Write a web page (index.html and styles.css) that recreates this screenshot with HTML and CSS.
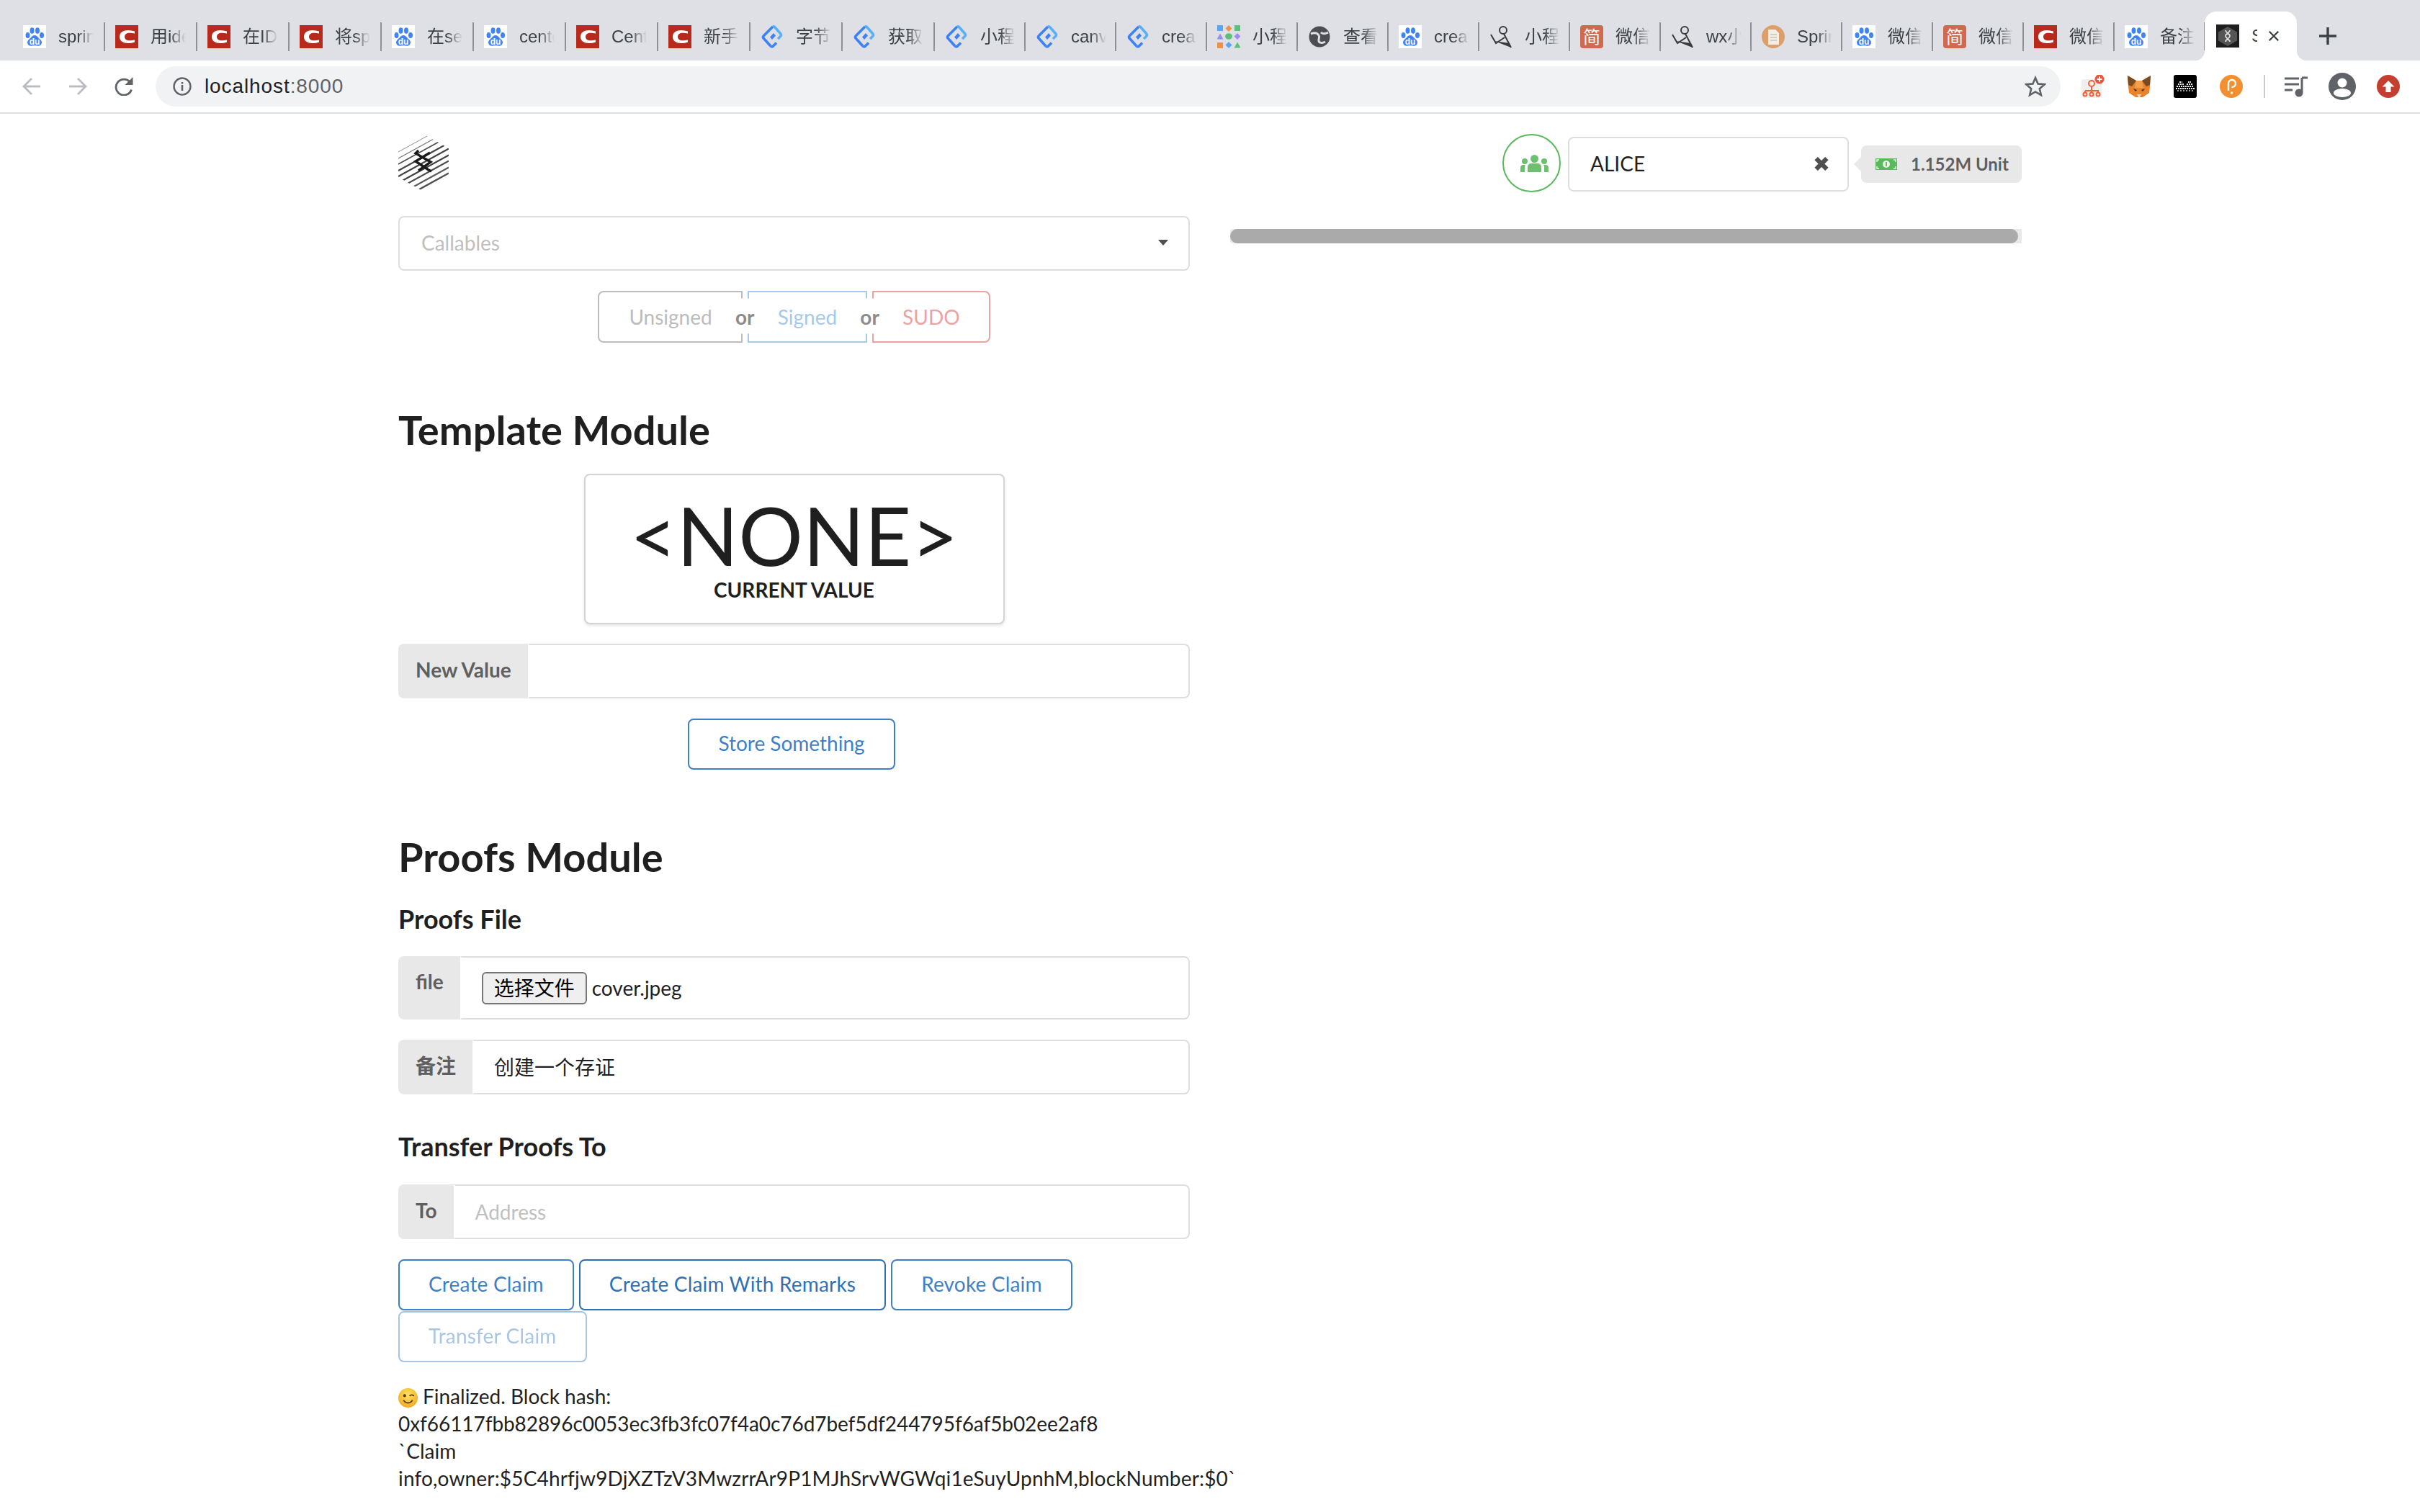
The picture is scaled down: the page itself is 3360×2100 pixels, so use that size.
FILE: index.html
```html
<!DOCTYPE html>
<html lang="en">
<head>
    <meta charset="UTF-8" />
    <meta name="viewport" content="width=device-width, initial-scale=1.0" />
    <title>Substrate Front End</title>
    <link rel="stylesheet" href="styles.css">
</head>
<body>
    <!-- Icon sheet -->
    <svg class="icon-sheet" xmlns="http://www.w3.org/2000/svg">
        <symbol id="i-baidu" viewBox="0 0 32 32">
            <rect width="32" height="32" fill="#fff"/>
            <ellipse cx="6.500" cy="14" rx="3" ry="4" fill="#3f83f5"/>
            <ellipse cx="12.500" cy="7.500" rx="3" ry="4.300" fill="#3f83f5"/>
            <ellipse cx="20" cy="7.500" rx="3" ry="4.300" fill="#3f83f5"/>
            <ellipse cx="26" cy="14" rx="3" ry="4" fill="#3f83f5"/>
            <path d="M16 14c3.500 0 4.500 3 7 5 3 2.500 3.500 4.500 2.500 7-1 2.500-3.500 3-6 2.500-2.500-.5-4.500-.5-7 0-2.500.5-5 0-6-2.500s-.5-4.500 2.500-7c2.500-2 3.500-5 7-5z" fill="#3f83f5"/>
            <text x="16" y="27" class="icon-du">du</text>
        </symbol>
        <symbol id="i-csdn" viewBox="0 0 32 32">
            <rect width="32" height="32" fill="#b92a1d"/>
            <path d="M27 8.500c-3-1-6-1.500-9-1.500C11 7 6 10 6 16s5 9 12 9c3 0 6-.5 9-1.500v-3c-2.500.5-5 .8-7 .8-4.500 0-7-2-7-5.300s2.500-5.300 7-5.300c2 0 4.500.3 7 .8z" fill="#fff"/>
        </symbol>
        <symbol id="i-chevron" viewBox="0 0 32 32">
            <path d="M17 2 4.500 14.500Q2.500 16.500 4.500 18.500L14 29" fill="none" stroke="#3b82f6" stroke-width="3.600"/>
            <path d="M14 29q1.500 1.500 3.500 0L22 24.500" fill="none" stroke="#3b82f6" stroke-width="3.600"/>
            <path d="M17 2q1.500-.5 2.500.5l8 9q2 2 0 4L24 19" fill="none" stroke="#57b0f8" stroke-width="3.600"/>
            <path d="m18 11-5 5.500 3 3.500 5-5.500z" fill="#3b82f6"/>
        </symbol>
        <symbol id="i-grid" viewBox="0 0 32 32">
            <rect x="0" y="0" width="8" height="8" fill="#5ba4f7"/>
            <path d="m16 0 4.500 4.500L16 9l-4.500-4.500z" fill="#f0914a"/>
            <rect x="24" y="0" width="8" height="8" fill="#5cc07a"/>
            <path d="m4 11.500 4.500 8h-9z" fill="#9a8cf0"/>
            <ellipse cx="16" cy="15.500" rx="5" ry="4.200" fill="#5cc07a"/>
            <path d="m28 11 4.500 4.500L28 20l-4.500-4.500z" fill="#9a8cf0"/>
            <rect x="0" y="24" width="8" height="8" fill="#f0914a"/>
            <path d="m16 23 4.500 4.500L16 32l-4.500-4.500z" fill="#5ba4f7"/>
            <path d="m28 23.500 4.500 8h-9z" fill="#5cc07a"/>
        </symbol>
        <symbol id="i-globe" viewBox="0 0 32 32">
            <circle cx="16" cy="16" r="14.500" fill="#4c4e52"/>
            <path d="M4 12c5-2 9-1 11 2s-1 5 0 8 5 3 9 1M28 10c-4 2-8 2-10 0" fill="none" stroke="#dfe0e5" stroke-width="3"/>
        </symbol>
        <symbol id="i-ying" viewBox="0 0 32 32">
            <circle cx="19" cy="7" r="5" fill="none" stroke="#3a3a3a" stroke-width="2"/>
            <path d="M2 13l7 12 12-8M20 12l10 19" fill="none" stroke="#3a3a3a" stroke-width="2"/>
            <path d="M7 22l21 3 2 6z" fill="#3a3a3a"/>
        </symbol>
        <symbol id="i-jian" viewBox="0 0 32 32">
            <rect width="32" height="32" rx="4" fill="#cf6a50"/>
            <text x="16" y="25" class="icon-jian">简</text>
        </symbol>
        <symbol id="i-doc" viewBox="0 0 32 32">
            <circle cx="16" cy="16" r="16" fill="#dc9f6b"/>
            <path d="M9 6h10l5 5v16H9z" fill="#f3efe8"/>
            <path d="M12 13h9M12 17h9M12 21h9" stroke="#c9c2b6" stroke-width="1.500"/>
        </symbol>
        <symbol id="i-chain" viewBox="0 0 32 32">
            <rect width="32" height="32" fill="#1e1e1e"/>
            <path d="M16 3 29 10.500v12L16 30 3 22.500v-12z" fill="#555"/>
            <path d="M13 8c0 4 6 4 6 8s-6 4-6 8M19 8c0 4-6 4-6 8s6 4 6 8" fill="none" stroke="#ddd" stroke-width="1.800"/>
        </symbol>
    </svg>

    <header class="browser-chrome">
        <div class="tab-strip">
            <div class="tab"><svg class="favicon"><use href="#i-baidu"/></svg><span class="tab-title">spring</span></div>
            <div class="tab"><svg class="favicon"><use href="#i-csdn"/></svg><span class="tab-title">用idea</span></div>
            <div class="tab"><svg class="favicon"><use href="#i-csdn"/></svg><span class="tab-title">在IDEA</span></div>
            <div class="tab"><svg class="favicon"><use href="#i-csdn"/></svg><span class="tab-title">将spring</span></div>
            <div class="tab"><svg class="favicon"><use href="#i-baidu"/></svg><span class="tab-title">在seata</span></div>
            <div class="tab"><svg class="favicon"><use href="#i-baidu"/></svg><span class="tab-title">centos</span></div>
            <div class="tab"><svg class="favicon"><use href="#i-csdn"/></svg><span class="tab-title">Centos</span></div>
            <div class="tab"><svg class="favicon"><use href="#i-csdn"/></svg><span class="tab-title">新手教程</span></div>
            <div class="tab"><svg class="favicon"><use href="#i-chevron"/></svg><span class="tab-title">字节跳动</span></div>
            <div class="tab"><svg class="favicon"><use href="#i-chevron"/></svg><span class="tab-title">获取数据</span></div>
            <div class="tab tab-narrow"><svg class="favicon"><use href="#i-chevron"/></svg><span class="tab-title">小程序</span></div>
            <div class="tab tab-narrow"><svg class="favicon"><use href="#i-chevron"/></svg><span class="tab-title">canvas</span></div>
            <div class="tab tab-narrow"><svg class="favicon"><use href="#i-chevron"/></svg><span class="tab-title">create</span></div>
            <div class="tab tab-narrow"><svg class="favicon"><use href="#i-grid"/></svg><span class="tab-title">小程序</span></div>
            <div class="tab tab-narrow"><svg class="favicon"><use href="#i-globe"/></svg><span class="tab-title">查看详情</span></div>
            <div class="tab tab-narrow"><svg class="favicon"><use href="#i-baidu"/></svg><span class="tab-title">create</span></div>
            <div class="tab tab-narrow"><svg class="favicon"><use href="#i-ying"/></svg><span class="tab-title">小程序</span></div>
            <div class="tab tab-narrow"><svg class="favicon"><use href="#i-jian"/></svg><span class="tab-title">微信小程</span></div>
            <div class="tab tab-narrow"><svg class="favicon"><use href="#i-ying"/></svg><span class="tab-title">wx小程</span></div>
            <div class="tab tab-narrow"><svg class="favicon"><use href="#i-doc"/></svg><span class="tab-title">Spring</span></div>
            <div class="tab tab-narrow"><svg class="favicon"><use href="#i-baidu"/></svg><span class="tab-title">微信小程</span></div>
            <div class="tab tab-narrow"><svg class="favicon"><use href="#i-jian"/></svg><span class="tab-title">微信小程</span></div>
            <div class="tab tab-narrow"><svg class="favicon"><use href="#i-csdn"/></svg><span class="tab-title">微信小程</span></div>
            <div class="tab tab-narrow"><svg class="favicon"><use href="#i-baidu"/></svg><span class="tab-title">备注说明</span></div>
            <div class="tab-active">
                <svg class="favicon"><use href="#i-chain"/></svg>
                <span class="tab-title tab-title-short">Substrate</span>
                <svg class="tab-close" viewBox="0 0 18 18"><path d="M2 2l14 14M16 2 2 16" stroke="#3c4043" stroke-width="2.600"/></svg>
            </div>
            <svg class="new-tab" viewBox="0 0 24 24"><path d="M12 0v24M0 12h24" stroke="#3c4043" stroke-width="3.400"/></svg>
        </div>

        <div class="toolbar">
            <div class="tool-btn"><svg class="tool-nav" viewBox="0 0 26 26"><path d="M25 13H3M13 2 2 13l11 11" fill="none" stroke="#bcbdc0" stroke-width="2.800"/></svg></div>
            <div class="tool-btn"><svg class="tool-nav" viewBox="0 0 26 26"><path d="M1 13h22M13 2l11 11-11 11" fill="none" stroke="#bcbdc0" stroke-width="2.800"/></svg></div>
            <div class="tool-btn"><svg class="tool-nav" viewBox="0 0 26 26"><path d="M23.500 17.500a11 11 0 1 1-2-10.500" fill="none" stroke="#5f6368" stroke-width="2.800"/><path d="M25.500 0v11h-11z" fill="#5f6368"/></svg></div>
            <div class="url-pill">
                <svg class="url-info" viewBox="0 0 26 26"><circle cx="13" cy="13" r="11.500" fill="none" stroke="#5f6368" stroke-width="2.400"/><path d="M13 11v8M13 7v2.500" stroke="#5f6368" stroke-width="2.600"/></svg>
                <span class="url-text">localhost<span class="url-port">:8000</span></span>
                <svg class="url-star" viewBox="0 0 30 30"><path d="m15 3 3.600 8.400 9.100.8-6.900 6 2.100 8.900-7.900-4.700-7.900 4.700 2.100-8.900-6.900-6 9.100-.8z" fill="none" stroke="#5f6368" stroke-width="2.600"/></svg>
            </div>
            <div class="ext-group">
                <div class="tool-btn">
                    <svg class="ext-icon" viewBox="0 0 32 32">
                        <rect x="0" y="6" width="28" height="26" rx="4" fill="#efefef"/>
                        <circle cx="14" cy="12" r="4" fill="none" stroke="#f0623c" stroke-width="2"/>
                        <path d="M14 16v6M5 22v3M14 22v3M23 25v-3H5" fill="none" stroke="#f0623c" stroke-width="2"/>
                        <circle cx="5" cy="27" r="2.500" fill="none" stroke="#f0623c" stroke-width="2"/>
                        <circle cx="14" cy="27" r="2.500" fill="none" stroke="#f0623c" stroke-width="2"/>
                        <circle cx="23" cy="27" r="2.500" fill="none" stroke="#f0623c" stroke-width="2"/>
                        <circle cx="25" cy="6" r="6.500" fill="#f0523c"/>
                        <path d="M25 2.500v7M21.500 6h7" stroke="#fff" stroke-width="1.800"/>
                    </svg>
                </div>
                <div class="tool-btn">
                    <svg class="ext-icon" viewBox="0 0 32 32">
                        <path d="M0 1l12 7h8L32 1l-1 15-1 9-9 6h-10l-9-6-1-9z" fill="#e8832a"/>
                        <path d="M0 1l12 7-6 8-5-2z" fill="#7a4a22"/>
                        <path d="M32 1 20 8l6 8 5-2z" fill="#7a4a22"/>
                        <path d="M12 8h8l2 10H10z" fill="#f2a04f"/>
                        <path d="M8 19l5 2-2 2zM24 19l-5 2 2 2z" fill="#3a2a1c"/>
                        <path d="M13 27h6l-2 4h-2z" fill="#e6d6c4"/>
                    </svg>
                </div>
                <div class="tool-btn">
                    <svg class="ext-icon" viewBox="0 0 32 32">
                        <rect width="32" height="32" rx="3" fill="#000"/>
                        <path d="M8 10h4M20 10h4M6 13h8M18 13h8M4 16h24M3 19h26" stroke="#f0f0f0" stroke-width="2" stroke-dasharray="2 1"/>
                        <path d="M5 22h22" stroke="#999" stroke-width="2" stroke-dasharray="2 2"/>
                    </svg>
                </div>
                <div class="tool-btn">
                    <svg class="ext-icon" viewBox="0 0 32 32">
                        <circle cx="16" cy="16" r="16" fill="#f29031"/>
                        <path d="M12 22V11.500a5 5 0 1 1 4.500 5.500" fill="none" stroke="#fff" stroke-width="2.400"/>
                        <circle cx="16.500" cy="25" r="1.700" fill="#fff"/>
                    </svg>
                </div>
                <div class="ext-divider"></div>
                <div class="tool-btn">
                    <svg class="ext-icon" viewBox="0 0 32 32">
                        <path d="M0 5h20M0 13h20M0 21h11" stroke="#5f6368" stroke-width="3"/>
                        <path d="M24 4v20" stroke="#5f6368" stroke-width="3"/>
                        <path d="M24 4h8" stroke="#5f6368" stroke-width="3"/>
                        <circle cx="20" cy="25" r="5.500" fill="#5f6368"/>
                    </svg>
                </div>
                <div class="tool-btn">
                    <svg class="avatar-icon" viewBox="0 0 38 38">
                        <circle cx="19" cy="19" r="19" fill="#5f6368"/>
                        <circle cx="19" cy="14" r="6.500" fill="#fff"/>
                        <ellipse cx="19" cy="28" rx="12" ry="6" fill="#fff"/>
                    </svg>
                </div>
                <div class="tool-btn">
                    <svg class="ext-icon" viewBox="0 0 32 32">
                        <circle cx="16" cy="16" r="16" fill="#c53f31"/>
                        <path d="M16 8l8.500 8.500h-5V24h-7v-7.500h-5z" fill="#fff"/>
                    </svg>
                </div>
            </div>
        </div>
    </header>

    <main class="container">
        <div class="topbar">
            <svg class="logo" viewBox="0 0 70 80">
                <defs>
                    <clipPath id="hex"><path d="M35 0 70 20v40L35 80 0 60V20z"/></clipPath>
                </defs>
                <g clip-path="url(#hex)" stroke="#222">
                    <path d="M0 8 70-30.500" stroke-width=".8" opacity=".4"/>
                    <path d="M0 17 70-21.500" stroke-width=".9" opacity=".45"/>
                    <path d="M0 25 70-13.500" stroke-width="1" opacity=".5"/>
                    <path d="M0 34 70-4.500" stroke-width="1.200" opacity=".6"/>
                    <path d="M0 42 70 3.500" stroke-width="1.600" opacity=".8"/>
                    <path d="M0 51 70 12.500" stroke-width="2" opacity=".85"/>
                    <path d="M0 59 70 20.500" stroke-width="2.200" opacity=".85"/>
                    <path d="M0 68 70 29.500" stroke-width="2.200" opacity=".85"/>
                    <path d="M0 76 70 37.500" stroke-width="2.200" opacity=".8"/>
                    <path d="M0 85 70 46.500" stroke-width="2.200" opacity=".75"/>
                    <path d="M0 93 70 54.500" stroke-width="2.400" opacity=".8"/>
                    <path d="M0 102 70 63.500" stroke-width="2.600" opacity=".85"/>
                    <path d="M0 110 70 71.500" stroke-width="2.800" opacity=".9"/>
                    <path d="M0 119 70 80.500" stroke-width="3" opacity=".9"/>
                </g>
                <path d="M28 23 24 27l21 12-17 12M44 26 24 38l18 12 4 2" fill="none" stroke="#1a1a1a" stroke-width="3.400"/>
            </svg>
            <div class="account">
                <div class="account-circle">
                    <svg class="users-icon" viewBox="0 0 39 24">
                        <circle cx="19.500" cy="5.500" r="5.500"/>
                        <circle cx="6" cy="9" r="4"/>
                        <circle cx="33" cy="9" r="4"/>
                        <path d="M10 24V17c0-3 2-5 5-5h9c3 0 5 2 5 5v7z"/>
                        <path d="M0 24v-6c0-3 2-4 4-4h3c-1 1-1 2-1 4v6zM39 24v-6c0-3-2-4-4-4h-3c1 1 1 2 1 4v6z"/>
                    </svg>
                </div>
                <div class="account-select">
                    <span>ALICE</span>
                    <svg class="clear-icon" viewBox="0 0 19 18"><path d="M2.500 2l14 14M16.500 2l-14 14" stroke="#4f4f4f" stroke-width="6"/></svg>
                </div>
                <div class="balance">
                    <svg class="money-icon" viewBox="0 0 30 16">
                        <rect width="30" height="16" fill="#5cb85c"/>
                        <circle cx="15" cy="8" r="5" fill="#e9f5e9"/>
                        <path d="M15 5v6" stroke="#5cb85c" stroke-width="1.800"/>
                        <path d="M2 5V2h3M28 5V2h-3M2 11v3h3M28 11v3h-3" fill="none" stroke="#e9f5e9" stroke-width="1.400"/>
                    </svg>
                    <span>1.152M Unit</span>
                </div>
            </div>
        </div>

        <div class="columns">
            <div class="col-left">
                <div class="callables">
                    <span class="placeholder">Callables</span>
                    <i class="caret"></i>
                </div>

                <div class="tx-group">
                    <div class="tx-btn tx-unsigned">Unsigned</div>
                    <div class="tx-or">or</div>
                    <div class="tx-btn tx-signed">Signed</div>
                    <div class="tx-or">or</div>
                    <div class="tx-btn tx-sudo">SUDO</div>
                </div>

                <!-- Template module -->
                <h1 class="module-title">Template Module</h1>
                <div class="stat-card">
                    <div class="stat-value">&lt;NONE&gt;</div>
                    <div class="stat-label">Current Value</div>
                </div>
                <div class="field field-first">
                    <div class="field-label">New Value</div>
                    <div class="field-input"></div>
                </div>
                <div class="center-row">
                    <div class="blue-btn">Store Something</div>
                </div>

                <!-- Proofs module -->
                <h1 class="module-title">Proofs Module</h1>
                <h3 class="sub-title">Proofs File</h3>
                <div class="field field-file">
                    <div class="field-label field-label-top">file</div>
                    <div class="field-input">
                        <span class="file-btn">选择文件</span>
                        <span class="file-name">cover.jpeg</span>
                    </div>
                </div>
                <div class="field">
                    <div class="field-label">备注</div>
                    <div class="field-input">创建一个存证</div>
                </div>

                <h3 class="sub-title sub-title-spaced">Transfer Proofs To</h3>
                <div class="field">
                    <div class="field-label">To</div>
                    <div class="field-input placeholder">Address</div>
                </div>
                <div class="action-row">
                    <div class="blue-btn">Create Claim</div>
                    <div class="blue-btn blue-btn-hover">Create Claim With Remarks</div>
                    <div class="blue-btn">Revoke Claim</div>
                    <div class="blue-btn blue-btn-disabled">Transfer Claim</div>
                </div>

                <div class="tx-status">
                    <svg class="emoji" viewBox="0 0 26 26">
                        <defs>
                            <radialGradient id="face" cx=".5" cy=".35" r=".7"><stop offset="0" stop-color="#ffe25c"/><stop offset="1" stop-color="#f2a51d"/></radialGradient>
                        </defs>
                        <circle cx="13" cy="13" r="13" fill="url(#face)"/>
                        <circle cx="8.500" cy="10" r="2" fill="#5b3a10"/>
                        <path d="M15 10.500c2-2 4-2 6 0" fill="none" stroke="#5b3a10" stroke-width="1.600"/>
                        <path d="M7 16c3 5 9 5 12 0" fill="none" stroke="#5b3a10" stroke-width="1.800"/>
                    </svg>Finalized. Block hash: <span class="status-hash">0xf66117fbb82896c0053ec3fb3fc07f4a0c76d7bef5df244795f6af5b02ee2af8</span><br>
                    `Claim <span class="status-owner">info,owner:$5C4hrfjw9DjXZTzV3MwzrrAr9P1MJhSrvWGWqi1eSuyUpnhM,blockNumber:$0`</span>
                </div>
            </div>

            <div class="col-right">
                <div class="progress"><div class="progress-fill"></div></div>
            </div>
        </div>
    </main>
</body>
</html>
```

FILE: styles.css
```css
/* Base */
html, body {
    margin: 0;
    height: 2100px;
    overflow: hidden;
    background: #fff;
}

body {
    font-family: Lato, "Noto Sans CJK SC", sans-serif;
    font-size: 28px;
    line-height: 38px;
    color: #1f1f1f;
}

.icon-sheet {
    display: none;
}

.icon-du {
    font-family: "Liberation Sans", sans-serif;
    font-size: 12px;
    font-weight: bold;
    fill: #fff;
    text-anchor: middle;
}

.icon-jian {
    font-family: "Noto Sans CJK SC", sans-serif;
    font-size: 24px;
    fill: #fff;
    text-anchor: middle;
}

/* Browser tabs */
.browser-chrome {
    font-family: "Liberation Sans", "Noto Sans CJK SC", sans-serif;
}

.tab-strip {
    display: flex;
    align-items: flex-end;
    box-sizing: border-box;
    height: 84px;
    padding-left: 18px;
    background: #dfe0e5;
}

.tab {
    display: flex;
    align-items: center;
    box-sizing: border-box;
    width: 128px;
    height: 40px;
    margin-bottom: 13px;
    padding-left: 14px;
    border-right: 2px solid #8f9094;
}

.tab-narrow {
    width: 126px;
}

.favicon {
    flex: none;
    width: 32px;
    height: 32px;
}

.tab-title {
    overflow: hidden;
    width: 49px;
    margin-left: 17px;
    font-size: 24px;
    line-height: 32px;
    white-space: nowrap;
    color: #3c4043;
    -webkit-mask-image: linear-gradient(to right, #000 55%, transparent);
    mask-image: linear-gradient(to right, #000 55%, transparent);
}

.tab-active {
    position: relative;
    display: flex;
    align-items: center;
    box-sizing: border-box;
    width: 128px;
    height: 68px;
    margin-left: -1px;
    padding-left: 16px;
    background: #fff;
    border-radius: 16px 16px 0 0;
}

/* concave corners of the active tab */
.tab-active::before,
.tab-active::after {
    content: "";
    position: absolute;
    bottom: 0;
    width: 14px;
    height: 14px;
}

.tab-active::before {
    left: -14px;
    background: radial-gradient(circle at 0 0, #dfe0e5 14px, #fff 14.5px);
}

.tab-active::after {
    right: -14px;
    background: radial-gradient(circle at 100% 0, #dfe0e5 14px, #fff 14.5px);
}

.tab-title-short {
    width: 8px;
    -webkit-mask-image: none;
    mask-image: none;
}

.tab-close {
    width: 16px;
    height: 16px;
    margin-left: 15px;
}

.new-tab {
    width: 24px;
    height: 24px;
    margin: 0 0 22px 31px;
}

/* Toolbar */
.toolbar {
    display: flex;
    align-items: center;
    box-sizing: content-box;
    height: 72px;
    padding: 0 12px;
    background: #fff;
    border-bottom: 2px solid #dddde2;
}

.tool-btn {
    display: flex;
    flex: none;
    align-items: center;
    justify-content: center;
    width: 64px;
    height: 56px;
}

.tool-nav {
    width: 26px;
    height: 26px;
}

.url-pill {
    display: flex;
    flex: 1;
    align-items: center;
    height: 56px;
    margin-left: 12px;
    padding: 0 20px 0 24px;
    background: #f1f2f4;
    border-radius: 28px;
}

.url-info {
    width: 26px;
    height: 26px;
}

.url-text {
    margin-left: 18px;
    font-size: 28px;
    letter-spacing: .9px;
    color: #202124;
}

.url-port {
    color: #5f6368;
}

.url-star {
    width: 30px;
    height: 30px;
    margin-left: auto;
}

.ext-group {
    display: flex;
    align-items: center;
    margin-left: 13px;
}

.ext-icon {
    width: 32px;
    height: 32px;
}

.avatar-icon {
    width: 38px;
    height: 38px;
}

.ext-divider {
    width: 2px;
    height: 32px;
    margin: 0 11px 0 13px;
    background: #ccc;
}

/* Page */
.container {
    width: 2254px;
    margin: 0 auto;
}

.topbar {
    display: flex;
    align-items: flex-start;
    justify-content: space-between;
    padding-top: 28px;
    margin-bottom: 33px;
}

.logo {
    width: 70px;
    height: 80px;
}

.account {
    display: flex;
    align-items: center;
    height: 81px;
}

.account-circle {
    display: flex;
    align-items: center;
    justify-content: center;
    box-sizing: border-box;
    width: 81px;
    height: 81px;
    padding-left: 8px;
    border: 2px solid #5cb85c;
    border-radius: 50%;
}

.users-icon {
    flex: none;
    width: 39px;
    height: 24px;
    fill: #6cc070;
}

.account-select {
    display: flex;
    align-items: center;
    justify-content: space-between;
    box-sizing: border-box;
    width: 390px;
    height: 76px;
    margin: 3px 0 0 10px;
    padding: 0 26px 2px 29px;
    border: 2px solid #dedede;
    border-radius: 8px;
}

.clear-icon {
    width: 20px;
    height: 19px;
}

.balance {
    position: relative;
    display: flex;
    align-items: center;
    box-sizing: border-box;
    width: 223px;
    height: 52px;
    margin: 3px 0 0 17px;
    padding-left: 20px;
    font-size: 24px;
    font-weight: 700;
    color: #5f5f5f;
    background: #e8e8e8;
    border-radius: 8px;
}

/* pointer of the balance label */
.balance::before {
    content: "";
    position: absolute;
    top: 19px;
    left: -7px;
    width: 14px;
    height: 14px;
    background: #e8e8e8;
    transform: rotate(45deg);
}

.money-icon {
    width: 30px;
    height: 16px;
    margin-right: 19px;
}

.columns {
    display: grid;
    grid-template-columns: 1099px 1099px;
    gap: 56px;
}

.placeholder {
    color: #bfbfbf;
}

.callables {
    display: flex;
    align-items: center;
    justify-content: space-between;
    box-sizing: border-box;
    height: 76px;
    padding: 0 28px 2px 30px;
    border: 2px solid #dedede;
    border-radius: 8px;
}

.caret {
    width: 0;
    height: 0;
    border-top: 8px solid #4f4f4f;
    border-right: 7px solid transparent;
    border-left: 7px solid transparent;
}

/* Unsigned / Signed / SUDO */
.tx-group {
    display: flex;
    justify-content: center;
    margin-top: 28px;
}

.tx-btn {
    display: flex;
    align-items: center;
    box-sizing: border-box;
    height: 72px;
    padding: 0 40px;
    border: 2px solid;
}

.tx-unsigned {
    padding-left: 41px;
    color: #bcbcbc;
    border-color: #bcbcbc;
    border-radius: 8px 0 0 8px;
}

.tx-signed {
    color: #a6c9ea;
    border-color: #a6c9ea;
}

.tx-sudo {
    padding-left: 40px;
    color: #e8a3a3;
    border-color: #e8a3a3;
    border-radius: 0 8px 8px 0;
}

.tx-or {
    position: relative;
    z-index: 1;
    display: flex;
    align-items: center;
    justify-content: center;
    width: 7px;
    font-weight: 700;
    color: #8c8c8c;
}

/* white disc that cuts the button edges behind "or" */
.tx-or::before {
    content: "";
    position: absolute;
    top: 10px;
    left: -22px;
    z-index: -1;
    width: 50px;
    height: 50px;
    background: #fff;
    border-radius: 50%;
}

/* Headings */
.module-title {
    margin: 85px 0 25px;
    font-size: 56px;
    font-weight: 700;
    line-height: 72px;
}

.sub-title {
    margin: 0 0 29px;
    padding-top: 2px;
    font-size: 36px;
    font-weight: 700;
    line-height: 46px;
}

.sub-title-spaced {
    margin: 47px 0 30px;
}

/* Stat card */
.stat-card {
    box-sizing: border-box;
    width: 584px;
    height: 209px;
    margin: 0 auto 27px;
    padding-top: 27px;
    text-align: center;
    background: #fff;
    border: 2px solid #d4d4d5;
    border-radius: 8px;
    box-shadow: 0 2px 4px rgba(34, 36, 38, .12);
}

.stat-value {
    font-size: 112px;
    line-height: 112px;
}

.stat-label {
    margin-top: 6px;
    font-weight: 700;
    line-height: 28px;
    text-transform: uppercase;
}

/* Input rows */
.field {
    display: flex;
    height: 76px;
    margin-bottom: 28px;
}

.field-file {
    height: 88px;
}

.field-label {
    display: flex;
    align-items: center;
    padding: 0 23px 4px 24px;
    font-weight: 700;
    color: #5f5f5f;
    background: #e8e8e8;
    border-radius: 8px 0 0 8px;
}

.field-label-top {
    align-items: flex-start;
    padding-top: 16px;
}

.field-input {
    display: flex;
    flex: 1;
    align-items: center;
    padding-left: 28px;
    border: 2px solid #dedede;
    border-left-color: transparent;
    border-radius: 0 8px 8px 0;
}

.file-btn {
    box-sizing: border-box;
    height: 45px;
    padding: 0 15px;
    line-height: 41px;
    color: #000;
    background: #efefef;
    border: 2px solid #767676;
    border-radius: 6px;
}

.file-name {
    margin-left: 7px;
}

/* Buttons */
.center-row {
    display: flex;
    justify-content: center;
    padding-right: 7px;
}

.blue-btn {
    display: flex;
    align-items: center;
    box-sizing: border-box;
    height: 71px;
    padding: 0 40px 3px;
    color: #3f7fc4;
    border: 2px solid #3f7fc4;
    border-radius: 8px;
}

.blue-btn-hover {
    color: #2f70b3;
    border-color: #2f70b3;
}

.blue-btn-disabled {
    opacity: .45;
}

.action-row {
    display: flex;
    flex-wrap: wrap;
    gap: 1px 7px;
    letter-spacing: .18px;
}

.tx-status {
    margin-top: 28px;
}

.status-hash {
    letter-spacing: -.07px;
}

.status-owner {
    letter-spacing: .17px;
}

.emoji {
    width: 27px;
    height: 27px;
    margin-right: 7px;
    vertical-align: -5px;
}

/* Right column */
.col-right {
    padding-top: 18px;
}

.progress {
    height: 20px;
    background: #e8e8e8;
    border-radius: 4px 0 0 4px;
}

.progress-fill {
    width: 1094px;
    height: 20px;
    background: #aaa;
    border-radius: 10px;
}
```
